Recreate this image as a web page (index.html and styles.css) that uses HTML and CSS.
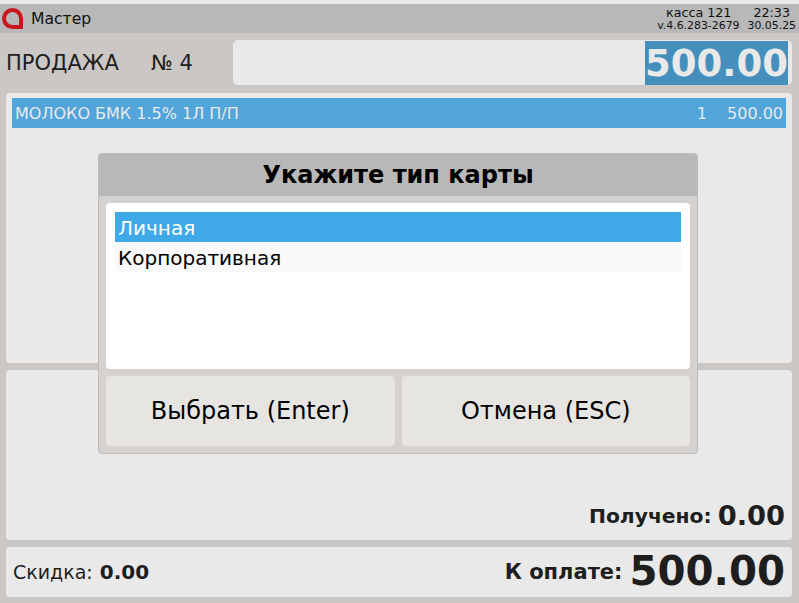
FILE: index.html
```html
<!DOCTYPE html>
<html lang="ru">
<head>
  <meta charset="UTF-8" />
  <title>Касса</title>
  <link rel="stylesheet" href="styles.css">
</head>
<body>
  <div class="screen">
    <div class="titlebar">
      <div class="title-left">
        <svg class="logo" width="22" height="22" viewBox="0 0 22 22">
          <path d="M19 19H10.500A8.500 8.500 0 1 1 19 10.500Z" fill="none" stroke="#c8161f" stroke-width="4"/>
        </svg>
        <span>Мастер</span>
      </div>
      <div class="title-right">
        <div class="info-top"><span>касса 121</span><span>22:33</span></div>
        <div class="info-bottom"><span>v.4.6.283-2679</span><span>30.05.25</span></div>
      </div>
    </div>

    <div class="sale-row">
      <div class="sale-name">ПРОДАЖА</div>
      <div class="sale-num">№ 4</div>
      <div class="sale-field"><div class="sale-total">500.00</div></div>
    </div>

    <div class="panel items">
      <div class="item-row">
        <span>МОЛОКО БМК 1.5% 1Л П/П</span>
        <span class="item-right"><span>1</span><span>500.00</span></span>
      </div>
    </div>

    <div class="panel received">
      <span class="label-bold">Получено:</span>
      <span class="received-sum">0.00</span>
    </div>

    <div class="panel totals">
      <div class="discount">Скидка: <b>0.00</b></div>
      <div class="to-pay">
        <span class="label-bold">К оплате:</span>
        <span class="to-pay-sum">500.00</span>
      </div>
    </div>

    <div class="dialog">
      <div class="dialog-head">Укажите тип карты</div>
      <div class="dialog-body">
        <div class="card-list">
          <div class="card-item selected">Личная</div>
          <div class="card-item">Корпоративная</div>
        </div>
        <div class="dialog-buttons">
          <button>Выбрать (Enter)</button>
          <button>Отмена (ESC)</button>
        </div>
      </div>
    </div>
  </div>
</body>
</html>
```

FILE: styles.css
```css
* { box-sizing: border-box; }
html, body { margin: 0; height: 100%; }
body {
  font-family: "DejaVu Sans", sans-serif;
  color: #1e1e1e;
  background: #cbc7c4;
  overflow: hidden;
}
.screen {
  position: relative;
  width: 799px;
  height: 603px;
  border-top: 4px solid #e9e9e9;
  display: flex;
  flex-direction: column;
}
.titlebar {
  height: 29px;
  flex: none;
  background: #b8b8b8;
  display: flex;
  justify-content: space-between;
  align-items: center;
  padding: 0 3px 0 2px;
  color: #111;
}
.title-left {
  display: flex;
  align-items: center;
  gap: 7px;
  font-size: 15.6px;
}
.logo { display: block; }
.title-right { text-align: right; }
.info-top {
  display: flex;
  justify-content: flex-end;
  gap: 22px;
  padding-right: 6px;
  font-size: 12.7px;
  line-height: 15px;
}
.info-bottom {
  display: flex;
  justify-content: flex-end;
  gap: 8px;
  font-size: 10.9px;
  line-height: 12px;
}
.sale-row {
  height: 60px;
  flex: none;
  display: flex;
  align-items: center;
  padding: 0 7px 0 6px;
  font-size: 21px;
}
.sale-name { width: 145px; }
.sale-num { width: 82px; }
.sale-field {
  flex: 1;
  height: 45px;
  background: #e9e9e9;
  border-radius: 5px;
  display: flex;
  justify-content: flex-end;
  padding: 1px 4px 0 0;
  margin-top: -1px;
}
.sale-total {
  width: 143px;
  background: #458fbd;
  color: #e9e9e9;
  font-size: 37px;
  font-weight: bold;
  line-height: 46px;
  height: 44px;
  text-align: center;
}
.panel {
  background: #e9e9e9;
  border-radius: 4px;
  margin: 0 7px 7px 6px;
  flex: none;
}
.items {
  height: 270px;
  padding: 5px 6px;
}
.item-row {
  height: 30px;
  background: #52a5da;
  color: #e9e9e9;
  font-size: 16px;
  display: flex;
  justify-content: space-between;
  align-items: center;
  padding: 0 3px;
}
.item-right { display: flex; gap: 20px; }
.received {
  height: 170px;
  display: flex;
  justify-content: flex-end;
  align-items: flex-end;
  gap: 6px;
  padding: 0 7px 9px 0;
}
.label-bold { font-size: 20.3px; font-weight: bold; }
.received .label-bold { line-height: 30px; }
.received-sum { font-size: 27.3px; font-weight: bold; line-height: 30px; }
.totals {
  height: 50px;
  margin-bottom: 0;
  display: flex;
  justify-content: space-between;
  align-items: center;
  padding: 0 7px;
}
.totals .label-bold { font-size: 21px; }
.discount { font-size: 19px; }
.discount b { font-size: 20px; margin-left: 1px; }
.to-pay { display: flex; align-items: center; gap: 7px; }
.to-pay-sum { font-size: 40.3px; font-weight: bold; line-height: 48px; }

.dialog {
  position: absolute;
  left: 98px;
  top: 149px;
  width: 600px;
  height: 301px;
  background: #d5d1ce;
  border: 1px solid #bcbcbc;
  border-radius: 4px;
  overflow: hidden;
  color: #000;
}
.dialog-head {
  height: 42px;
  background: #b8b8b8;
  font-size: 24px;
  font-weight: bold;
  line-height: 42px;
  text-align: center;
}
.dialog-body { padding: 7px; }
.card-list {
  height: 166px;
  background: #fff;
  border-radius: 4px;
  padding: 9px;
}
.card-item {
  height: 30px;
  line-height: 32px;
  padding-left: 3px;
  font-size: 20px;
  background: #f9f9f9;
}
.card-item.selected { background: #40aae9; color: #fff; }
.dialog-buttons {
  display: flex;
  gap: 7px;
  margin-top: 7px;
}
.dialog-buttons button {
  flex: 1;
  height: 70px;
  background: #e6e5e2;
  border: none;
  border-radius: 4px;
  font-family: inherit;
  font-size: 24px;
  color: #000;
}
```
